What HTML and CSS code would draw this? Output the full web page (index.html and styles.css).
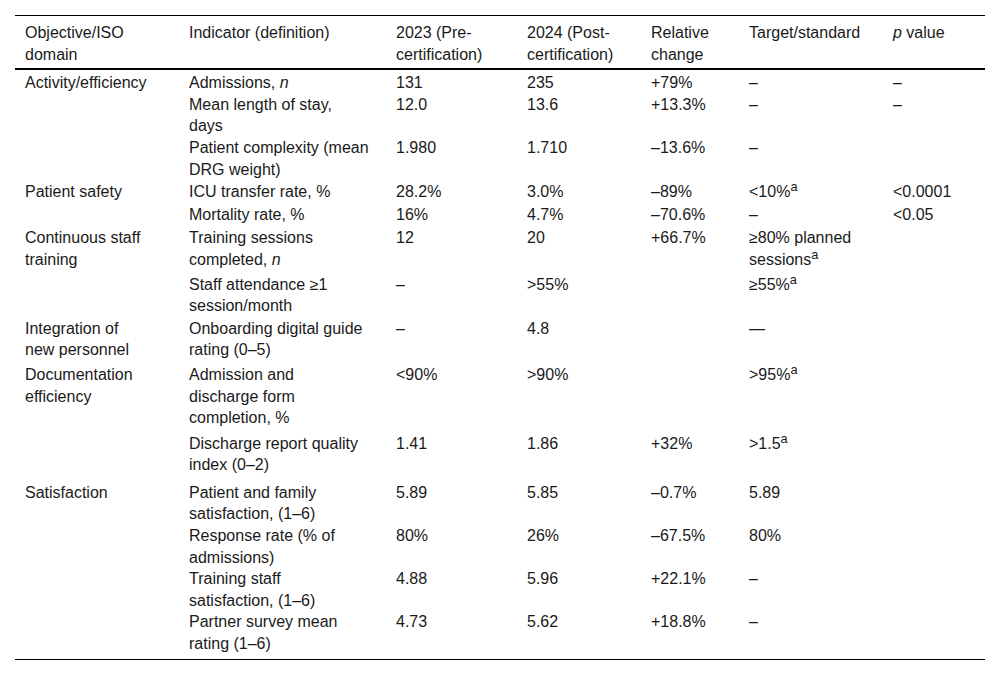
FILE: index.html
```html
<!DOCTYPE html>
<html lang="en">
<head>
<meta charset="utf-8">
<title>Indicators table</title>
<link rel="stylesheet" href="styles.css">
</head>
<body>
<table class="data">
  <colgroup>
    <col class="c1"><col class="c2"><col class="c3"><col class="c4"><col class="c5"><col class="c6"><col class="c7">
  </colgroup>
  <thead>
    <tr>
      <th>Objective/ISO<br>domain</th>
      <th>Indicator (definition)</th>
      <th>2023 (Pre-<br>certification)</th>
      <th>2024 (Post-<br>certification)</th>
      <th>Relative<br>change</th>
      <th>Target/standard</th>
      <th><i>p</i> value</th>
    </tr>
  </thead>
  <tbody>
    <tr class="first">
      <td>Activity/efficiency</td><td>Admissions, <i>n</i></td><td>131</td><td>235</td><td>+79%</td><td>–</td><td>–</td>
    </tr>
    <tr>
      <td></td><td>Mean length of stay,<br>days</td><td>12.0</td><td>13.6</td><td>+13.3%</td><td>–</td><td>–</td>
    </tr>
    <tr class="pb1">
      <td></td><td>Patient complexity (mean<br>DRG weight)</td><td>1.980</td><td>1.710</td><td>–13.6%</td><td>–</td><td></td>
    </tr>
    <tr class="pb1">
      <td>Patient safety</td><td>ICU transfer rate, %</td><td>28.2%</td><td>3.0%</td><td>–89%</td><td>&lt;10%<sup>a</sup></td><td>&lt;0.0001</td>
    </tr>
    <tr class="pb2">
      <td></td><td>Mortality rate, %</td><td>16%</td><td>4.7%</td><td>–70.6%</td><td>–</td><td>&lt;0.05</td>
    </tr>
    <tr class="pb3">
      <td>Continuous staff<br>training</td><td>Training sessions<br>completed, <i>n</i></td><td>12</td><td>20</td><td>+66.7%</td><td>≥80% planned<br>sessions<sup>a</sup></td><td></td>
    </tr>
    <tr class="pb1">
      <td></td><td>Staff attendance ≥1<br>session/month</td><td>–</td><td>&gt;55%</td><td></td><td>≥55%<sup>a</sup></td><td></td>
    </tr>
    <tr class="pb3">
      <td>Integration of<br>new personnel</td><td>Onboarding digital guide<br>rating (0–5)</td><td>–</td><td>4.8</td><td></td><td>—</td><td></td>
    </tr>
    <tr class="pb4">
      <td>Documentation<br>efficiency</td><td>Admission and<br>discharge form<br>completion, %</td><td>&lt;90%</td><td>&gt;90%</td><td></td><td>&gt;95%<sup>a</sup></td><td></td>
    </tr>
    <tr class="pb6">
      <td></td><td>Discharge report quality<br>index (0–2)</td><td>1.41</td><td>1.86</td><td>+32%</td><td>&gt;1.5<sup>a</sup></td><td></td>
    </tr>
    <tr>
      <td>Satisfaction</td><td>Patient and family<br>satisfaction, (1–6)</td><td>5.89</td><td>5.85</td><td>–0.7%</td><td>5.89</td><td></td>
    </tr>
    <tr>
      <td></td><td>Response rate (% of<br>admissions)</td><td>80%</td><td>26%</td><td>–67.5%</td><td>80%</td><td></td>
    </tr>
    <tr>
      <td></td><td>Training staff<br>satisfaction, (1–6)</td><td>4.88</td><td>5.96</td><td>+22.1%</td><td>–</td><td></td>
    </tr>
    <tr class="last">
      <td></td><td>Partner survey mean<br>rating (1–6)</td><td>4.73</td><td>5.62</td><td>+18.8%</td><td>–</td><td></td>
    </tr>
  </tbody>
</table>
</body>
</html>
```

FILE: styles.css
```css
html, body {
  margin: 0;
  padding: 0;
  background: #ffffff;
}

body {
  padding: 15px;
  font-family: "Liberation Sans", Arial, sans-serif;
  font-size: 16px;
  line-height: 21.6px;
  color: #1a1a1a;
}

.data {
  width: 970px;
  table-layout: fixed;
  border-collapse: collapse;
  border-top: 1px solid #000000;
  border-bottom: 1px solid #000000;
}

.c1 { width: 164px; }
.c2 { width: 207px; }
.c3 { width: 131px; }
.c4 { width: 124px; }
.c5 { width: 98px; }
.c6 { width: 144px; }
.c7 { width: 102px; }

.data th,
.data td {
  padding: 0 10px;
  text-align: left;
  vertical-align: top;
  font-weight: normal;
  white-space: nowrap;
}

.data thead th {
  padding-top: 6px;
  padding-bottom: 3px;
  border-bottom: 2px solid #000000;
}

.data tr.first td { padding-top: 2px; }
.data tr.pb1 td { padding-bottom: 1px; }
.data tr.pb2 td { padding-bottom: 2px; }
.data tr.pb3 td { padding-bottom: 3px; }
.data tr.pb4 td { padding-bottom: 4px; }
.data tr.pb6 td { padding-bottom: 6px; }
.data tr.last td { padding-bottom: 4px; }

.data sup {
  font-size: 0.8em;
  line-height: 0;
  vertical-align: super;
}
```
